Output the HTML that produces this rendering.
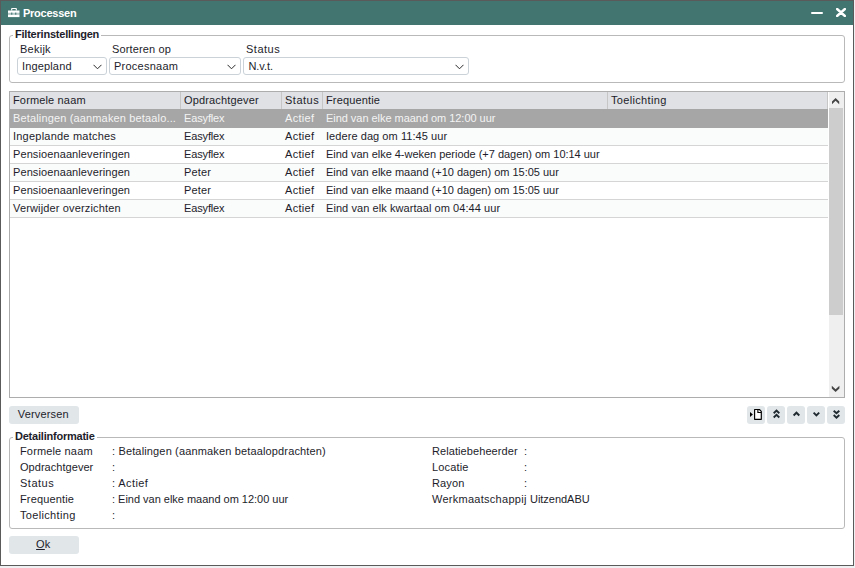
<!DOCTYPE html>
<html><head><meta charset="utf-8">
<style>
*{box-sizing:border-box;margin:0;padding:0}
html,body{width:855px;height:568px;overflow:hidden;background:#eef0f1;font-family:"Liberation Sans",sans-serif;font-size:11px;color:#1d1d2b;letter-spacing:0.15px}
div,svg{position:absolute}
#dlg{left:0;top:0;width:854px;height:566px;border:1px solid #5a5a5a;background:#fff}
#title{left:1px;top:1px;width:852px;height:24px;background:#427570;color:#fff}
.t{white-space:nowrap;line-height:13px}
.b{font-weight:bold;letter-spacing:-0.05px}
.fs{border:1px solid #b9b9b9;border-radius:3px}
.lg{background:#fff;padding:0 2px;white-space:nowrap;line-height:13px;font-weight:bold;letter-spacing:-0.22px}
.sel{border:1px solid #cbd3d9;border-radius:3px;height:18px;background:#fff}
.sel .t{left:4px;top:2px}
.sel svg{right:4px;top:6px}
.hc{top:92px;height:17px;line-height:17px;white-space:nowrap}
.sep{top:92px;width:1px;height:17px;background:#c6c6c6}
.rc{white-space:nowrap;line-height:17px}
.row{left:10px;width:818px;height:18px;border-bottom:1px solid #d5d5d5;background:#fff}
.row.alt{background:#fafbfb}
.row.s{background:#a6a6a6;color:#f4f4f4;border-bottom:0;height:19px}
.btn{background:#e1e6e9;border-radius:3px;height:18px;text-align:center;line-height:17px;padding-right:1.4px}
.nb{top:406px;width:18px;height:18px;background:#e1e6e9;border-radius:3px}
.nb svg{left:0;top:0}
</style></head><body>
<div id="dlg"></div>
<div id="title">
  <svg style="left:6.7px;top:7px" width="12" height="10" viewBox="0 0 12 10">
    <path d="M3.1 0.9Q3.1 0 4 0H8Q8.9 0 8.9 0.9V2.5H7.7V1.1H4.3V2.5H3.1Z" fill="#fff"/>
    <rect x="0" y="2.5" width="11.5" height="2.4" fill="#fff"/>
    <rect x="0" y="4.9" width="11.5" height="1.6" fill="#fff" opacity="0.6"/>
    <rect x="0" y="6.5" width="11.5" height="2.6" fill="#fff"/>
    <rect x="3.2" y="4.6" width="1.1" height="2.1" fill="#427570"/>
    <rect x="7.2" y="4.6" width="1.1" height="2.1" fill="#427570"/>
  </svg>
  <div class="t b" style="left:22px;top:6px;font-size:11px;color:#fff;letter-spacing:-0.25px">Processen</div>
  <div style="left:810px;top:10.6px;width:12px;height:2.1px;background:#fff;border-radius:1px"></div>
  <svg style="left:835.2px;top:7.2px" width="10" height="9" viewBox="0 0 10 9"><path d="M1.1 1L8.9 8M8.9 1L1.1 8" stroke="#fff" stroke-width="2.4" stroke-linecap="round"/></svg>
</div>

<div class="fs" style="left:9px;top:35px;width:836px;height:48px"></div>
<div class="lg" style="left:13px;top:28px">Filterinstellingen</div>
<div class="t" style="left:20px;top:43px;letter-spacing:0.25px">Bekijk</div>
<div class="t" style="left:112px;top:43px">Sorteren op</div>
<div class="t" style="left:246px;top:43px;letter-spacing:0.5px">Status</div>
<div class="sel" style="left:17px;top:57px;width:90px"><div class="t" style="top:2px">Ingepland</div><svg width="9" height="6" viewBox="0 0 9 6"><path d="M0.5 0.8L4.5 4.8L8.5 0.8" stroke="#2a2a2a" fill="none" stroke-width="1"/></svg></div>
<div class="sel" style="left:109px;top:57px;width:132px"><div class="t" style="top:2px;letter-spacing:0.25px">Procesnaam</div><svg width="9" height="6" viewBox="0 0 9 6"><path d="M0.5 0.8L4.5 4.8L8.5 0.8" stroke="#2a2a2a" fill="none" stroke-width="1"/></svg></div>
<div class="sel" style="left:243px;top:57px;width:226px"><div class="t" style="top:2px;left:4.5px;letter-spacing:-0.07px">N.v.t.</div><svg width="9" height="6" viewBox="0 0 9 6"><path d="M0.5 0.8L4.5 4.8L8.5 0.8" stroke="#2a2a2a" fill="none" stroke-width="1"/></svg></div>

<!-- grid -->
<div style="left:9px;top:91px;width:836px;height:307px;border:1px solid #adadad;background:#fff"></div>
<div style="left:10px;top:92px;width:818px;height:17px;background:#dfe1e4"></div>
<div class="sep" style="left:180px"></div>
<div class="sep" style="left:281px"></div>
<div class="sep" style="left:322px"></div>
<div class="sep" style="left:607px"></div>
<div class="sep" style="left:827px"></div>
<div class="hc" style="left:13px">Formele naam</div>
<div class="hc" style="left:184px">Opdrachtgever</div>
<div class="hc" style="left:285px;letter-spacing:0.5px">Status</div>
<div class="hc" style="left:326px">Frequentie</div>
<div class="hc" style="left:611px;letter-spacing:0.33px">Toelichting</div>

<div class="row s" style="top:109px"></div>
<div class="row alt" style="top:128px"></div>
<div class="row" style="top:146px"></div>
<div class="row alt" style="top:164px"></div>
<div class="row" style="top:182px"></div>
<div class="row alt" style="top:200px"></div>

<div class="rc" style="left:13px;top:110px;color:#f4f4f4">Betalingen (aanmaken betaalo...</div>
<div class="rc" style="left:184px;top:110px;color:#f4f4f4;letter-spacing:-0.14px">Easyflex</div>
<div class="rc" style="left:285px;top:110px;color:#f4f4f4;letter-spacing:0.31px">Actief</div>
<div class="rc" style="left:326px;top:110px;color:#f4f4f4;letter-spacing:-0.04px">Eind van elke maand om 12:00 uur</div>

<div class="rc" style="left:13px;top:128px;letter-spacing:0.22px">Ingeplande matches</div>
<div class="rc" style="left:184px;top:128px;letter-spacing:-0.14px">Easyflex</div>
<div class="rc" style="left:285px;top:128px;letter-spacing:0.31px">Actief</div>
<div class="rc" style="left:326px;top:128px;letter-spacing:0.065px">Iedere dag om 11:45 uur</div>

<div class="rc" style="left:13px;top:146px;letter-spacing:0.1px">Pensioenaanleveringen</div>
<div class="rc" style="left:184px;top:146px;letter-spacing:-0.14px">Easyflex</div>
<div class="rc" style="left:285px;top:146px;letter-spacing:0.31px">Actief</div>
<div class="rc" style="left:326px;top:146px;letter-spacing:-0.025px">Eind van elke 4-weken periode (+7 dagen) om 10:14 uur</div>

<div class="rc" style="left:13px;top:164px;letter-spacing:0.1px">Pensioenaanleveringen</div>
<div class="rc" style="left:184px;top:164px">Peter</div>
<div class="rc" style="left:285px;top:164px;letter-spacing:0.31px">Actief</div>
<div class="rc" style="left:326px;top:164px;letter-spacing:-0.01px">Eind van elke maand (+10 dagen) om 15:05 uur</div>

<div class="rc" style="left:13px;top:182px;letter-spacing:0.1px">Pensioenaanleveringen</div>
<div class="rc" style="left:184px;top:182px">Peter</div>
<div class="rc" style="left:285px;top:182px;letter-spacing:0.31px">Actief</div>
<div class="rc" style="left:326px;top:182px;letter-spacing:-0.01px">Eind van elke maand (+10 dagen) om 15:05 uur</div>

<div class="rc" style="left:13px;top:200px">Verwijder overzichten</div>
<div class="rc" style="left:184px;top:200px;letter-spacing:-0.14px">Easyflex</div>
<div class="rc" style="left:285px;top:200px;letter-spacing:0.31px">Actief</div>
<div class="rc" style="left:326px;top:200px;letter-spacing:0.07px">Eind van elk kwartaal om 04:44 uur</div>

<!-- scrollbar -->
<div style="left:829px;top:92px;width:15px;height:305px;background:#efefef"></div>
<svg style="left:831px;top:97px" width="9" height="8" viewBox="0 0 9 8"><path d="M1 4.6L4.6 1.1L8.2 4.6L8.2 7.2L4.6 3.7L1 7.2Z" fill="#444"/></svg>
<div style="left:829px;top:108px;width:14px;height:207px;background:#cdcdcd"></div>
<svg style="left:831px;top:385px" width="9" height="8" viewBox="0 0 9 8"><path d="M0.8 0.8L4.6 4.3L8.4 0.8L8.4 3.5L4.6 7L0.8 3.5Z" fill="#444"/></svg>

<div class="btn" style="left:9px;top:406px;width:70px">Verversen</div>

<div class="nb" style="left:747px"><svg width="18" height="18" viewBox="0 0 18 18"><path d="M3 6L5.9 8.4L3 10.9Z" fill="#000"/><path d="M7.6 3.5H12.4L14.3 5.4V13.3H7.6Z" fill="#fff" stroke="#000" stroke-width="1.15" stroke-linejoin="round"/><path d="M10.9 3.5V6.5H14.3" fill="none" stroke="#000" stroke-width="1.15"/></svg></div>
<div class="nb" style="left:767px"><svg width="18" height="18" viewBox="0 0 18 18"><path d="M6.7 7.2L9.5 4.6L12.3 7.2M6.7 11.5L9.5 8.9L12.3 11.5" stroke="#1f2a30" fill="none" stroke-width="1.9"/></svg></div>
<div class="nb" style="left:787px"><svg width="18" height="18" viewBox="0 0 18 18"><path d="M6.6 9.5L9.45 6.7L12.3 9.5" stroke="#1f2a30" fill="none" stroke-width="1.9"/></svg></div>
<div class="nb" style="left:807px"><svg width="18" height="18" viewBox="0 0 18 18"><path d="M6.6 6.6L9.4 9.4L12.2 6.6" stroke="#1f2a30" fill="none" stroke-width="1.9"/></svg></div>
<div class="nb" style="left:827px"><svg width="18" height="18" viewBox="0 0 18 18"><path d="M6.7 4.7L9.5 7.3L12.3 4.7M6.7 9L9.5 11.6L12.3 9" stroke="#1f2a30" fill="none" stroke-width="1.9"/></svg></div>

<div class="fs" style="left:9px;top:437px;width:836px;height:92px"></div>
<div class="lg" style="left:13px;top:430px">Detailinformatie</div>
<div class="t" style="left:20px;top:445px">Formele naam</div>
<div class="t" style="left:20px;top:461px;letter-spacing:0.04px">Opdrachtgever</div>
<div class="t" style="left:20px;top:477px;letter-spacing:0.5px">Status</div>
<div class="t" style="left:20px;top:493px">Frequentie</div>
<div class="t" style="left:20px;top:509px;letter-spacing:0.33px">Toelichting</div>
<div class="t" style="left:112px;top:445px">: Betalingen (aanmaken betaalopdrachten)</div>
<div class="t" style="left:112px;top:461px">:</div>
<div class="t" style="left:112px;top:477px;letter-spacing:0.4px">: Actief</div>
<div class="t" style="left:112px;top:493px;letter-spacing:-0.015px">: Eind van elke maand om 12:00 uur</div>
<div class="t" style="left:112px;top:509px">:</div>
<div class="t" style="left:432px;top:445px;letter-spacing:0.08px">Relatiebeheerder</div>
<div class="t" style="left:432px;top:461px">Locatie</div>
<div class="t" style="left:432px;top:477px">Rayon</div>
<div class="t" style="left:432px;top:493px;letter-spacing:0.27px">Werkmaatschappij</div>
<div class="t" style="left:524px;top:445px">:</div>
<div class="t" style="left:524px;top:461px">:</div>
<div class="t" style="left:524px;top:477px">:</div>
<div class="t" style="left:530px;top:493px;letter-spacing:-0.03px">UitzendABU</div>

<div class="btn" style="left:9px;top:536px;width:70px"><u>O</u>k</div>
</body></html>
